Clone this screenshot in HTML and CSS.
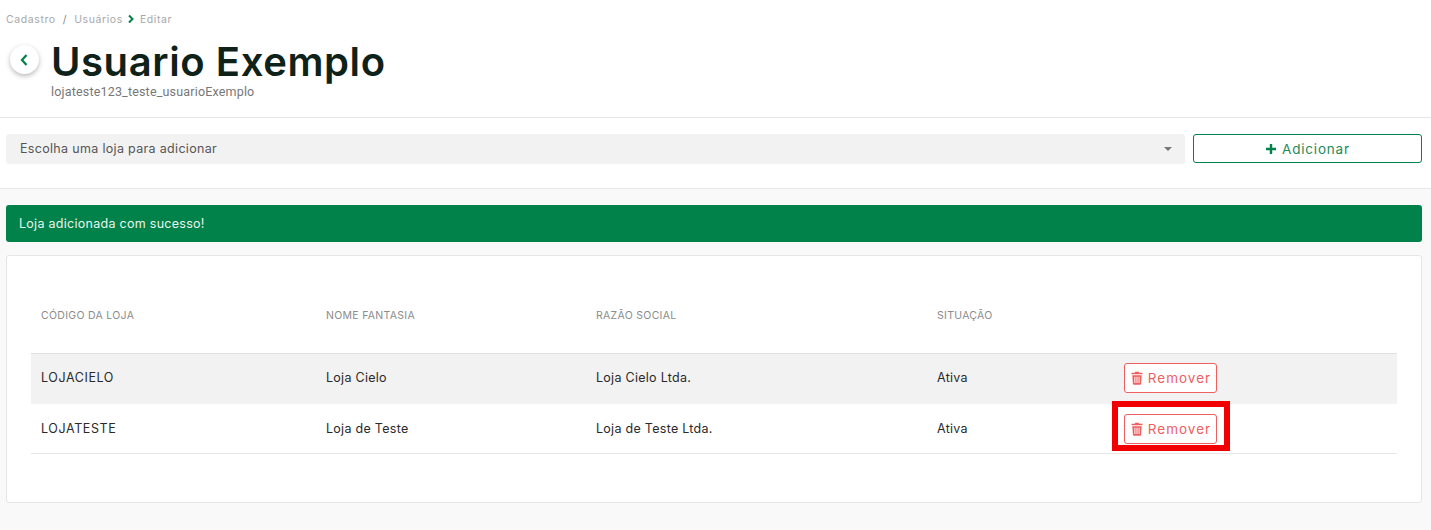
FILE: index.html
```html
<!DOCTYPE html>
<html lang="pt-BR">
<head>
<meta charset="utf-8">
<title>Usuario Exemplo</title>
<link rel="stylesheet" href="styles.css">
</head>
<body>
<header class="page-header">
  <nav class="crumbs">
    <span>Cadastro</span><span class="sep">/</span><span>Usuários</span>
    <svg class="crumb-chev" viewBox="0 0 8 10" width="8" height="10"><path d="M2 1.500 5.500 5 2 8.500" fill="none" stroke="#00824a" stroke-width="2"/></svg>
    <span>Editar</span>
  </nav>
  <div class="title-row">
    <button class="back" aria-label="Voltar"><svg viewBox="0 0 10 14" width="10" height="14"><path d="M6.500 2 2 7l4.500 5" fill="none" stroke="#00824a" stroke-width="2.200"/></svg></button>
    <div class="title-text">
      <h1>Usuario Exemplo</h1>
      <p>lojateste123_teste_usuarioExemplo</p>
    </div>
  </div>
</header>
<section class="filter">
  <div class="select"><span>Escolha uma loja para adicionar</span><i class="caret"></i></div>
  <button class="add"><svg viewBox="0 0 12 12" width="12" height="12"><path d="M6 1v10M1 6h10" stroke="#00824a" stroke-width="2.400" fill="none"/></svg>Adicionar</button>
</section>
<main class="content">
  <div class="alert">Loja adicionada com sucesso!</div>
  <div class="card">
    <table>
      <colgroup><col class="c1"><col class="c2"><col class="c3"><col class="c4"><col></colgroup>
      <thead>
        <tr><th>CÓDIGO DA LOJA</th><th>NOME FANTASIA</th><th>RAZÃO SOCIAL</th><th>SITUAÇÃO</th><th></th></tr>
      </thead>
      <tbody>
        <tr class="odd">
          <td class="code">LOJACIELO</td><td>Loja Cielo</td><td>Loja Cielo Ltda.</td><td>Ativa</td>
          <td><button class="remove"><svg viewBox="0 0 12 14" width="12" height="14"><path fill="#ee5f5f" fill-rule="evenodd" d="M4.300 0.800h3.400l.5 1H11.500v1.500H.5V1.800H3.800zM1.300 4.200h9.400l-.6 8.500q-.1 1-1 1H2.900q-.9 0-1-1zM3.400 5.800v6.200h1V5.800zM5.500 5.800v6.200h1V5.800zM7.600 5.800v6.200h1V5.800z"/></svg>Remover</button></td>
        </tr>
        <tr class="even">
          <td class="code">LOJATESTE</td><td>Loja de Teste</td><td>Loja de Teste Ltda.</td><td>Ativa</td>
          <td class="action"><span class="highlight"><button class="remove"><svg viewBox="0 0 12 14" width="12" height="14"><path fill="#ee5f5f" fill-rule="evenodd" d="M4.300 0.800h3.400l.5 1H11.500v1.500H.5V1.800H3.800zM1.300 4.200h9.400l-.6 8.500q-.1 1-1 1H2.900q-.9 0-1-1zM3.400 5.800v6.200h1V5.800zM5.500 5.800v6.200h1V5.800zM7.600 5.800v6.200h1V5.800z"/></svg>Remover</button></span></td>
        </tr>
      </tbody>
    </table>
  </div>
</main>
</body>
</html>
```
FILE: styles.css
```css
* { box-sizing: border-box; }
html, body { margin: 0; height: 100%; }
body {
  background: #f9f9f9;
  font-family: Inter, "Liberation Sans", sans-serif;
  color: #222;
  overflow: hidden;
}
button { font-family: inherit; cursor: pointer; }

.page-header {
  height: 118px;
  background: #fff;
  border-bottom: 1px solid #e6e6e6;
  padding: 12px 6px 0;
}
.crumbs {
  display: flex;
  align-items: center;
  height: 14px;
  font-size: 10.500px;
  letter-spacing: .6px;
  color: #a8a8a8;
}
.sep { margin: 0 7px; color: #888; }
.crumb-chev { margin: 0 5px 0 4px; }

.title-row { display: flex; padding: 14px 0 0 4px; }
.back {
  width: 29px;
  height: 29px;
  margin: 5px 12px 0 0;
  padding: 0;
  border: 0;
  border-radius: 50%;
  background: #fff;
  box-shadow: 0 2px 5px rgba(0,0,0,.28);
  display: flex;
  align-items: center;
  justify-content: center;
}
h1 {
  margin: 0;
  font-size: 40px;
  line-height: 44px;
  font-weight: 600;
  letter-spacing: .6px;
  color: #0f2219;
}
.title-text p {
  margin: 0;
  font-family: Roboto, sans-serif;
  font-size: 12.500px;
  line-height: 15px;
  letter-spacing: .18px;
  color: #777;
}

.filter {
  height: 71px;
  background: #fff;
  border-bottom: 1px solid #e6e6e6;
  padding: 16px 9px 0 6px;
  display: flex;
  gap: 8px;
}
.select {
  flex: 1;
  height: 30px;
  background: #f2f2f2;
  border-radius: 3px;
  padding: 0 13px 2px 14px;
  display: flex;
  align-items: center;
  justify-content: space-between;
  font-size: 12.500px;
  letter-spacing: .32px;
  color: #555;
}
.caret {
  width: 0;
  height: 0;
  margin-top: 2px;
  border: 4px solid transparent;
  border-top: 4px solid #777;
  border-bottom: 0;
}
.add {
  width: 229px;
  height: 29px;
  padding: 0;
  background: #fff;
  border: 1px solid #00824a;
  border-radius: 3px;
  color: #1f8a5a;
  font-size: 13.500px;
  letter-spacing: .8px;
  display: flex;
  align-items: center;
  justify-content: center;
  gap: 5px;
}

.content { padding: 16px 9px 0 6px; }
.alert {
  height: 37px;
  background: #00824a;
  color: #e8f5ee;
  border-radius: 3px;
  padding: 0 13px;
  display: flex;
  align-items: center;
  font-size: 12.500px;
  letter-spacing: .28px;
}
.card {
  margin-top: 13px;
  height: 248px;
  background: #fff;
  border: 1px solid #e6e6e6;
  border-radius: 3px;
  padding: 0 24px;
}
table { width: 1366px; border-collapse: collapse; table-layout: fixed; }
.c1 { width: 285px; }
.c2 { width: 270px; }
.c3 { width: 341px; }
.c4 { width: 187px; }
th {
  height: 97px;
  padding: 23px 10px 0;
  text-align: left;
  font-size: 10.500px;
  font-weight: 400;
  letter-spacing: .3px;
  color: #8c8c8c;
  border-bottom: 1px solid #e0e0e0;
}
td {
  padding: 0 10px;
  font-size: 12.500px;
  letter-spacing: .28px;
  color: #2a2a2a;
  border-bottom: 1px solid #e6e6e6;
}
td.code { letter-spacing: .6px; }
.odd td { height: 51px; padding-bottom: 2px; background: #f2f2f2; border-bottom: 0; }
.even td { height: 49px; }
.even td.action { padding-top: 1px; }
.remove {
  width: 93px;
  height: 30px;
  padding: 0 0 0 1px;
  background: #fff;
  border: 1px solid #ee5f5f;
  border-radius: 3px;
  color: #ee5f5f;
  font-size: 13.500px;
  letter-spacing: 1px;
  display: flex;
  align-items: center;
  justify-content: center;
  gap: 5px;
}
.highlight { position: relative; display: block; width: 93px; }
.highlight::after {
  content: "";
  position: absolute;
  inset: -13px -13px -7px -12px;
  border: 6px solid #f00000;
  pointer-events: none;
}
```
